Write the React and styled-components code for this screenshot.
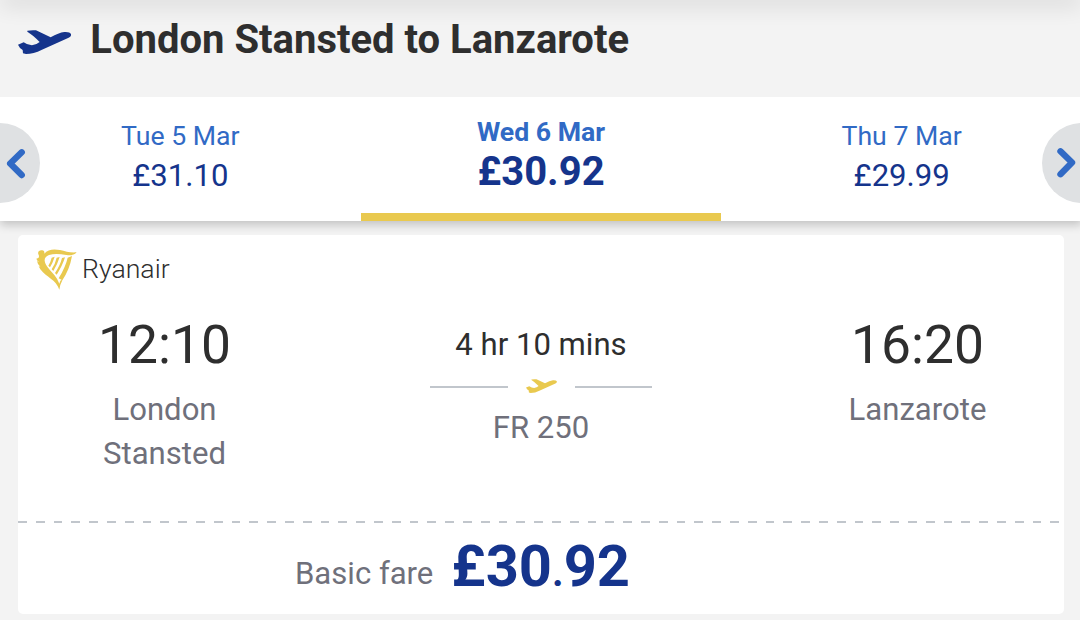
import React from "react";
import styled, { createGlobalStyle } from "styled-components";

const GlobalStyle = createGlobalStyle`
    * {
        box-sizing: border-box;
    }

    body {
        margin: 0;
        overflow: hidden;
        background: #f3f3f3;
        font-family: Roboto, "Liberation Sans", sans-serif;
        color: #2e2e2e;
    }
`;

const Page = styled.div`
    width: 1082px;
    height: 620px;
    overflow: hidden;
`;

const TopShadow = styled.div`
    height: 10px;
    margin-top: -10px;
    box-shadow: 0 4px 22px rgba(0, 0, 0, 0.16);
`;

const Header = styled.header`
    display: flex;
    align-items: center;
    height: 97px;
    padding: 0 0 18px 18px;

    svg {
        margin-top: 5px;
    }
`;

const Title = styled.h1`
    margin: 0 0 0 19px;
    font-size: 40px;
    line-height: 48px;
    font-weight: 700;
`;

const Dates = styled.nav`
    position: relative;
    display: grid;
    grid-template-columns: repeat(3, 1fr);
    height: 124px;
    background: #fff;
    box-shadow: 0 4px 9px rgba(0, 0, 0, 0.2);
    clip-path: inset(0 0 -20px 0);
`;

const DateTab = styled.div`
    display: flex;
    flex-direction: column;
    align-items: center;
    padding-top: ${({ $active }) => ($active ? "20px" : "24px")};
    border-bottom: 8px solid ${({ $active }) => ($active ? "#e9c94f" : "transparent")};
    font-weight: ${({ $active }) => ($active ? 700 : 400)};
`;

const Day = styled.span`
    color: #316ac5;
    font-size: 26.67px;
    line-height: 31px;
`;

const Price = styled.span`
    color: #15348c;
    font-size: ${({ $active }) => ($active ? "40px" : "31.1px")};
    line-height: 47px;
`;

const ArrowButton = styled.button`
    position: absolute;
    top: 26px;
    ${({ $side }) => $side}: -40px;
    width: 80px;
    height: 80px;
    padding: 0;
    border: 0;
    border-radius: 50%;
    background: #dfe1e3;

    svg {
        display: block;
    }
`;

const Card = styled.section`
    display: flex;
    flex-direction: column;
    height: 379px;
    margin: 14px 18px 0;
    border-radius: 5px;
    background: #fff;
`;

const Airline = styled.div`
    display: flex;
    align-items: center;
    height: 68px;
    padding-left: 18px;
    font-size: 26.67px;
    font-weight: 300;
`;

const AirlineName = styled.span`
    margin-left: 5px;
`;

const Flight = styled.div`
    display: grid;
    grid-template-columns: 293px 1fr 293px;
    height: 218px;
`;

const Stop = styled.div`
    display: flex;
    flex-direction: column;
    align-items: center;
    padding-top: 11px;
`;

const Time = styled.div`
    font-size: 53.33px;
    line-height: 62px;
`;

const Place = styled.div`
    width: 150px;
    margin-top: 12px;
    color: #6f707b;
    font-size: 31.1px;
    line-height: 44px;
    text-align: center;
`;

const Journey = styled.div`
    display: flex;
    flex-direction: column;
    align-items: center;
    padding-top: 24px;
    font-size: 31.1px;
    line-height: 36px;
`;

const Route = styled.div`
    display: flex;
    align-items: center;
    justify-content: space-between;
    width: 222px;
    height: 47px;

    svg {
        margin-bottom: 1px;
    }
`;

const Line = styled.span`
    width: 77.5px;
    height: 2px;
    margin-top: 1px;
    background: #c1c6cc;
`;

const FlightNumber = styled.span`
    color: #6f707b;
`;

const Divider = styled.div`
    height: 2px;
    background: repeating-linear-gradient(to right, #c1c6cc 0 8.9px, transparent 8.9px 17.8px);
`;

const Fare = styled.div`
    display: flex;
    align-items: flex-start;
    padding: 9px 0 0 277px;
`;

const FareLabel = styled.span`
    margin-top: 24px;
    color: #6f707b;
    font-size: 31.1px;
    line-height: 36px;
`;

const FareTotal = styled.span`
    margin-left: 18px;
    color: #15348c;
    font-size: 57.8px;
    line-height: 68px;
    font-weight: 700;
`;

const FareDot = styled.span`
    font-size: 40px;
    line-height: 1;
`;

function Plane({ width, color }) {
    return (
        <svg width={width} height={(width * 72) / 160} viewBox="54 90 160 72">
            <path
                fill={color}
                d="M54 134 L71 127 Q83 136 96 136 Q110 134 119 126 Q99 105 82 95 V92 Q94 90 108 91 L152 112 Q176 98 193 96 Q210 95 213 102 Q215 109 206 113 L126 149 Q100 162 78 162 L69 160 L68 150 Q58 144 54 134 Z"
            />
        </svg>
    );
}

function Harp() {
    return (
        <svg width="41" height="41" viewBox="77 59 123 123">
            <g fill="#e9c94f">
                <path d="M84 86 Q88 81 84 75 C81 66 89 62 94 63 C101 62 103 68 102 73 C112 60 130 58 149 62 C165 66 181 71 199 69 C191 78 181 79 168 77 C148 74 131 73 116 77 Q102 83 103 94 C105 110 120 122 132 137 Q142 149 147 163 Q149 156 152 152 L156 153 Q149 166 147 181 C137 151 108 144 90 120 L85 111 L90 112 Q81 104 80 95 L87 99 Q79 93 78 88 Z" />
                <path d="M124 85 L133 82 Q127 101 119 114 L114 109 Q121 98 124 85 Z" />
                <path d="M139 85 L148 83 Q141 106 129 125 L124 120 Q134 106 139 85 Z" />
                <path d="M155 86 L164 84 Q157 108 139 136 L134 131 Q150 107 155 86 Z" />
                <path d="M172 85 L185 80 Q178 120 156 153 L145 147 Q166 112 172 85 Z" />
            </g>
        </svg>
    );
}

function Chevron({ points }) {
    return (
        <svg width="80" height="80">
            <polyline
                points={points}
                fill="none"
                stroke="#316ac5"
                strokeWidth="6.4"
                strokeLinecap="round"
                strokeLinejoin="round"
            />
        </svg>
    );
}

const dates = [
    { day: "Tue 5 Mar", price: "£31.10" },
    { day: "Wed 6 Mar", price: "£30.92", active: true },
    { day: "Thu 7 Mar", price: "£29.99" },
];

export default function App() {
    return (
        <Page>
            <GlobalStyle />
            <TopShadow />
            <Header>
                <Plane width={53.3} color="#15348c" />
                <Title>London Stansted to Lanzarote</Title>
            </Header>
            <Dates>
                {dates.map(({ day, price, active }) => (
                    <DateTab key={day} $active={active}>
                        <Day>{day}</Day>
                        <Price $active={active}>{price}</Price>
                    </DateTab>
                ))}
                <ArrowButton $side="left" aria-label="Previous day">
                    <Chevron points="61.7,29.3 50.2,40.5 61.7,52" />
                </ArrowButton>
                <ArrowButton $side="right" aria-label="Next day">
                    <Chevron points="18.5,28.3 30,39.5 18.5,51.2" />
                </ArrowButton>
            </Dates>
            <Card>
                <Airline>
                    <Harp />
                    <AirlineName>Ryanair</AirlineName>
                </Airline>
                <Flight>
                    <Stop>
                        <Time>12:10</Time>
                        <Place>London Stansted</Place>
                    </Stop>
                    <Journey>
                        <span>4 hr 10 mins</span>
                        <Route>
                            <Line />
                            <Plane width={31} color="#e9c94f" />
                            <Line />
                        </Route>
                        <FlightNumber>FR 250</FlightNumber>
                    </Journey>
                    <Stop>
                        <Time>16:20</Time>
                        <Place>Lanzarote</Place>
                    </Stop>
                </Flight>
                <Divider />
                <Fare>
                    <FareLabel>Basic fare</FareLabel>
                    <FareTotal>
                        £30<FareDot>.</FareDot>92
                    </FareTotal>
                </Fare>
            </Card>
        </Page>
    );
}
